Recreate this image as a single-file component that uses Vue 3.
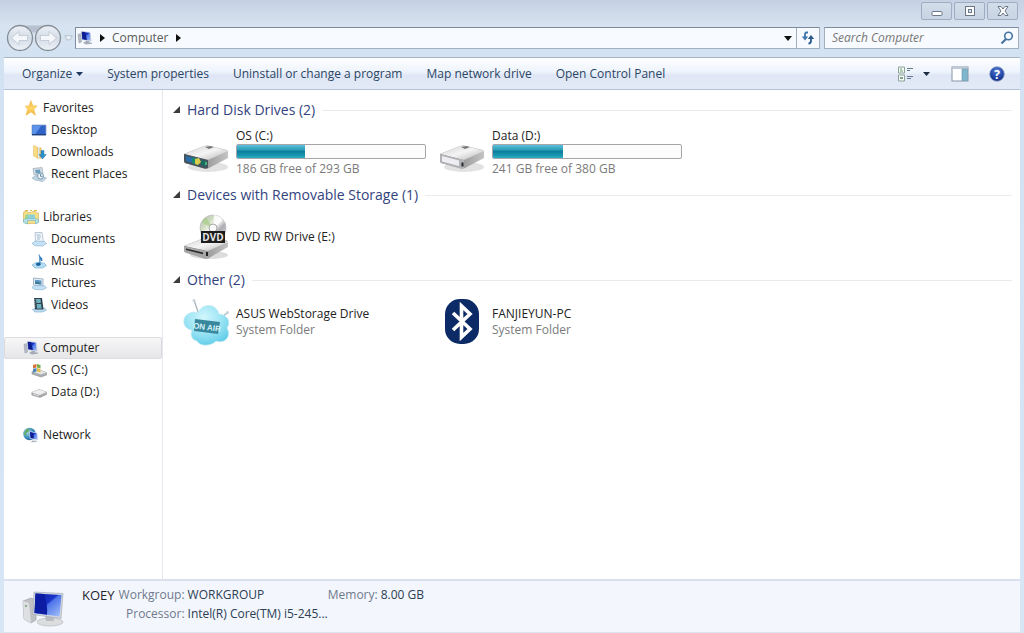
<script setup>
import { ref } from 'vue'

const search = ref('')

const groups = [
  {
    name: 'Favorites', icon: 'star',
    items: [
      { name: 'Desktop', icon: 'desktop' },
      { name: 'Downloads', icon: 'downloads' },
      { name: 'Recent Places', icon: 'recent' },
    ],
  },
  {
    name: 'Libraries', icon: 'libraries',
    items: [
      { name: 'Documents', icon: 'documents' },
      { name: 'Music', icon: 'music' },
      { name: 'Pictures', icon: 'pictures' },
      { name: 'Videos', icon: 'videos' },
    ],
  },
  {
    name: 'Computer', icon: 'computer', selected: true,
    items: [
      { name: 'OS (C:)', icon: 'osdrive' },
      { name: 'Data (D:)', icon: 'datadrive' },
    ],
  },
  { name: 'Network', icon: 'network', items: [] },
]

const sections = [
  {
    title: 'Hard Disk Drives (2)',
    items: [
      { name: 'OS (C:)', icon: 'drive-os', used: 36, note: '186 GB free of 293 GB' },
      { name: 'Data (D:)', icon: 'drive-data', used: 37, note: '241 GB free of 380 GB' },
    ],
  },
  {
    title: 'Devices with Removable Storage (1)',
    items: [{ name: 'DVD RW Drive (E:)', icon: 'dvd' }],
  },
  {
    title: 'Other (2)',
    items: [
      { name: 'ASUS WebStorage Drive', icon: 'cloud', note: 'System Folder' },
      { name: 'FANJIEYUN-PC', icon: 'bluetooth', note: 'System Folder' },
    ],
  },
]
</script>

<template>
  <div class="window">
    <svg class="defs" aria-hidden="true">
      <defs>
        <linearGradient id="gScreen" x1="0" y1="0" x2="1" y2="1">
          <stop offset="0" stop-color="#0a1f9c" /><stop offset=".45" stop-color="#1a35c8" />
          <stop offset=".5" stop-color="#4d74ea" /><stop offset="1" stop-color="#a9c4fa" />
        </linearGradient>
        <linearGradient id="gMetal" x1="0" y1="0" x2="1" y2="1">
          <stop offset="0" stop-color="#d2d2d2" /><stop offset=".5" stop-color="#f4f4f4" /><stop offset="1" stop-color="#b4b4b4" />
        </linearGradient>
        <linearGradient id="gSide" x1="0" y1="0" x2="1" y2="0">
          <stop offset="0" stop-color="#6f6f6f" /><stop offset="1" stop-color="#c4c4c4" />
        </linearGradient>
        <linearGradient id="gDisc" x1="0" y1="0" x2="1" y2="1">
          <stop offset="0" stop-color="#b4b8b4" /><stop offset=".3" stop-color="#cfdcc0" />
          <stop offset=".5" stop-color="#ffffff" /><stop offset=".65" stop-color="#adadb4" /><stop offset="1" stop-color="#e0e0e4" />
        </linearGradient>
        <radialGradient id="gCloud" cx=".45" cy=".3" r=".8">
          <stop offset="0" stop-color="#d2f6fc" /><stop offset=".5" stop-color="#9be4f4" /><stop offset="1" stop-color="#55c7e6" />
        </radialGradient>
        <radialGradient id="gGlobe" cx=".35" cy=".35" r=".7">
          <stop offset="0" stop-color="#a9dcef" /><stop offset=".6" stop-color="#3f8fc0" /><stop offset="1" stop-color="#1f5c9a" />
        </radialGradient>
        <radialGradient id="gHelp" cx=".5" cy=".3" r=".7">
          <stop offset="0" stop-color="#5c84da" /><stop offset=".6" stop-color="#2347a8" /><stop offset="1" stop-color="#152f80" />
        </radialGradient>
        <linearGradient id="gNav" x1="0" y1="0" x2="0" y2="1">
          <stop offset="0" stop-color="#eef2f7" /><stop offset=".5" stop-color="#d3dbe5" /><stop offset="1" stop-color="#edf3f9" />
        </linearGradient>
        <linearGradient id="gStar" x1="0" y1="0" x2="0" y2="1">
          <stop offset="0" stop-color="#f5a834" /><stop offset=".5" stop-color="#ffd868" /><stop offset="1" stop-color="#efae3c" />
        </linearGradient>
      </defs>

      <symbol id="star" viewBox="0 0 16 16">
        <path d="M8 .5 9.800 5.700 14.300 5.900 11 9.200 12.500 15.400 8 12 3 15.400 4.400 9.200 2 6.200 6 5.700z" fill="url(#gStar)" stroke="#f2c66c" stroke-width=".6" />
      </symbol>
      <symbol id="desktop" viewBox="0 0 16 16">
        <path d="M1 3h14v10H1z" fill="#2f63c8" stroke="#8ea4c8" stroke-width=".8" />
        <path d="M1.500 3.500h9L4 12.500H1.500z" fill="#5b92ea" />
        <path d="M1 12h14v1.300H1z" fill="#23407e" />
      </symbol>
      <symbol id="downloads" viewBox="0 0 16 16">
        <path d="M2.500 1.500 6.500 3v11l-4-2z" fill="#f9dc86" stroke="#e0b95c" stroke-width=".5" />
        <path d="M6 3.500h4.500v11H6z" fill="#efc368" />
        <path d="M7 3h1.500v11H7z" fill="#d7e8f4" />
        <path d="M10 6.500h3v4h2.300L11.500 15 8 10.500h2z" fill="#2d8fc8" stroke="#1b6ea8" stroke-width=".4" />
      </symbol>
      <symbol id="recent" viewBox="0 0 16 16">
        <path d="M2 2.500 11 1.500 12 8 3 9z" fill="#d5dde4" stroke="#94a8b6" stroke-width=".7" />
        <path d="M4 4 9 3.500 9.500 7 5 7.500z" fill="#6b9fc0" />
        <path d="M1 12 5 9.500 15.500 12 12 15.500 4 14z" fill="#c4d5e2" stroke="#8ca9be" stroke-width=".6" />
        <circle cx="9.500" cy="10" r="3" fill="#eff6fa" stroke="#7797ad" />
        <path d="M9.500 8v2.300h2" fill="none" stroke="#45708e" stroke-width=".8" />
      </symbol>
      <symbol id="libraries" viewBox="0 0 16 16">
        <path d="M.5 3 4 2l1 1.500h3L9 2.500h3.500l1 1.500h2V13L12 14.500H2.500L.5 12z" fill="#f6df86" stroke="#d9b95b" stroke-width=".7" />
        <path d="M2 1.500h3M7 1.500h2M11 1.500h3" stroke="#e1b850" />
        <path d="M3.500 5.500H12V11H3.500z" fill="#8fd0d4" /><path d="M2 6.500 5 5v6l-3 1z" fill="#9ed48f" />
        <path d="M.5 10.500 4 9.500h8l3.500 1v3L12.500 15v-3.500h-8V15l-4-1.500z" fill="#b7e1e8" stroke="#6fb3c4" stroke-width=".6" />
      </symbol>
      <symbol id="documents" viewBox="0 0 16 16">
        <path d="M4 1.500h7l1.500 9.500h-8z" fill="#f2f6fa" stroke="#9db2c6" stroke-width=".7" />
        <path d="M5.500 4h4M6 6h4M6 8h3" stroke="#9fb9d0" />
        <path d="M1 12.500 4.500 10l9 .5 2 2-4 2.500-7.500-.3z" fill="#c6e1f3" stroke="#8db8d8" stroke-width=".7" />
      </symbol>
      <symbol id="music" viewBox="0 0 16 16">
        <path d="M1 12 5 9.500l8 .5 2.500 2.500-4 2.500H4z" fill="#b4dcf2" stroke="#7fb5d6" stroke-width=".7" />
        <path d="M8 1.500c0 2.500 4 3 2.700 6.500C10.500 6 9 5.700 9 5.700V11" fill="#1f71b5" stroke="#1f71b5" stroke-width=".9" />
        <ellipse cx="7.300" cy="11.300" rx="2.300" ry="1.700" fill="#1b62a3" />
      </symbol>
      <symbol id="pictures" viewBox="0 0 16 16">
        <path d="M2.500 3 12 4v7l-9.500-1z" fill="#e8eff5" stroke="#8ba5b9" stroke-width=".8" />
        <path d="M4 4.800 10.500 5.500v4L4 8.800z" fill="#5b98c5" /><path d="M4 7.500l3-.8 3.500 2.800L4 8.800z" fill="#39758f" />
        <path d="M1 12.500 4 10.500l9.500.3 2 2-4 2-7.500-.3z" fill="#c6e1f3" stroke="#8db8d8" stroke-width=".7" />
      </symbol>
      <symbol id="videos" viewBox="0 0 16 16">
        <path d="M1.500 12.500 5 11h8.500l2 2-4 2H4z" fill="#bcdcf0" stroke="#86b2d0" stroke-width=".7" />
        <path d="M3 1h8l1.500 11.500H4z" fill="#30424f" />
        <path d="M5 2h4.500l.4 4H5.400zM5.600 7h4.500l.5 4.500H6z" fill="#6fb0bd" />
        <path d="M3.800 2v9" stroke="#cdd7dc" stroke-width=".7" stroke-dasharray="1 1" />
      </symbol>
      <symbol id="computer" viewBox="0 0 16 16">
        <path d="M1 4.500 3.500 3.500 4.500 12 2 13z" fill="#b7bdc8" stroke="#8c93a3" stroke-width=".5" />
        <path d="M4.500 1.500 13 2.500l1 8.500-9-1.500z" fill="url(#gScreen)" stroke="#c0c8da" stroke-width=".7" />
        <path d="M4.800 2 8 2.300 10 10 5.500 9.300z" fill="#0d1f8e" />
        <path d="M9 11h3l.5 1.500h2.500v1.300L9 14.500 6 13z" fill="#a6adb9" />
      </symbol>
      <symbol id="osdrive" viewBox="0 0 16 16">
        <path d="M1 9.500 7 7.500l8.500 3V13l-5.500 2-9-3z" fill="#a9adaf" stroke="#7f8486" stroke-width=".5" />
        <path d="M1 9.500 7 7.500l8.500 3-5.500 2z" fill="#e3e5e6" />
        <path d="M2 3 5.500 2v3.500L2 6.500z" fill="#d8733d" /><path d="M6 2 9.500 3v3.500L6 5.500z" fill="#79ae4c" />
        <path d="M2 7 5.500 6v3.500L2 10.500z" fill="#4d86bd" /><path d="M6 6 9.500 7v3.500L6 9.500z" fill="#e6bf4a" />
      </symbol>
      <symbol id="datadrive" viewBox="0 0 16 16">
        <path d="M.8 8.500 8 5.500 15.500 8v2.500L9 13.500.8 11z" fill="#a7a9ab" stroke="#8b8d90" stroke-width=".5" />
        <path d="M.8 8.500 8 5.500 15.500 8 9 11z" fill="#efefef" /><path d="M2 9.500 8 11.300v1L2 10.500z" fill="#dcdcde" />
      </symbol>
      <symbol id="network" viewBox="0 0 16 16">
        <circle cx="6.500" cy="7" r="6.200" fill="url(#gGlobe)" />
        <path d="M3 2.500 7 1.500 5.500 5 3.500 6 3 9 .8 7z" fill="#62ad68" />
        <path d="M6.500 4.500 14 6l.8 7-7.600-1.500z" fill="url(#gScreen)" stroke="#d6deec" stroke-width=".8" />
        <path d="M7 5.300 10 6l1 5.500-3.200-.6z" fill="#0d1f8e" /><path d="M9 13.500l4 .3 1 1.200-6 .2z" fill="#aeb5be" />
      </symbol>

      <symbol id="drive-os" viewBox="0 0 48 48">
        <ellipse cx="26" cy="39" rx="20" ry="5" fill="#e2e2e2" />
        <path d="M2 26 22 18q3-1 6 0l17 4q1 1 1 2v6L27 40q-2 1-5 0L3 35q-1-1-1-3z" fill="url(#gSide)" />
        <path d="M2 26 22 18q3-1 6 0l18 5-20 9z" fill="url(#gMetal)" />
        <path d="M23 19l5-1 4 1-5 2z" fill="#777" />
        <path d="M2 26 26 32V40q-2 1-4 .6L3 35q-1-1-1-3z" fill="#46555d" />
        <path d="M4 28 14 30.500v5.500L4 33z" fill="#2a6ca8" /><path d="M10 29.500l6 1.500v6l-6-2z" fill="#168a6c" />
        <path d="M13 31l4-1 2 4-3 3-3-1z" fill="#d8cc4b" /><path d="M19 32l5 1.500v5L19 37z" fill="#176d62" />
        <path d="M24 34v3" stroke="#58e889" stroke-width="1.200" />
      </symbol>
      <symbol id="drive-data" viewBox="0 0 48 48">
        <ellipse cx="26" cy="39" rx="20" ry="5" fill="#e2e2e2" />
        <path d="M2 26 22 18q3-1 6 0l17 4q1 1 1 2v6L27 40q-2 1-5 0L3 35q-1-1-1-3z" fill="url(#gSide)" />
        <path d="M2 26 22 18q3-1 6 0l18 5-20 9z" fill="url(#gMetal)" />
        <path d="M23 19l5-1 4 1-5 2z" fill="#777" />
        <path d="M2 26 26 32V40q-2 1-4 .6L3 35q-1-1-1-3z" fill="#b2b3b7" />
        <path d="M4 28 21 32.500v5.500L4 33.500z" fill="#eeeef2" />
        <path d="M24.500 34.500v4" stroke="#222" stroke-width="2" />
      </symbol>
      <symbol id="dvd" viewBox="0 0 48 48">
        <ellipse cx="27" cy="42" rx="19" ry="4" fill="#dcdcdc" />
        <path d="M2 33 22 25l22 2q2 1 2 3v4L27 45q-2 1-5 0L3 39q-1-1-1-3z" fill="url(#gSide)" />
        <path d="M2 33 22 25l24 4-20 9z" fill="url(#gMetal)" />
        <path d="M2 33 26 38.500V45q-2 1-4 .6L3 39.500q-1-1-1-3z" fill="#a6a6a6" />
        <path d="M4 35.500l17 4v1.800l-17-4.200z" fill="#2a2a2a" /><path d="M25 39v4" stroke="#222" stroke-width="2" />
        <circle cx="31" cy="15" r="13" fill="url(#gDisc)" stroke="#b9b9b9" stroke-width=".7" />
        <path d="M31 15 20 9.500q2-4 4-5z" fill="#a6cf84" opacity=".7" /><path d="M31 15 32 2q5 .5 8 4z" fill="#fff" opacity=".8" />
        <circle cx="31" cy="15" r="4" fill="#fafafa" stroke="#a9a9a9" />
        <path d="M19 18h24v12H19z" fill="#1d1d1d" />
      </symbol>
      <symbol id="cloud" viewBox="0 0 48 48">
        <path d="M12 2 17 17M46 14 37 22" stroke="#a6b6bd" stroke-width="1.300" />
        <circle cx="12" cy="2.500" r="1.500" fill="#c6d3d8" /><circle cx="45.500" cy="14.500" r="1.500" fill="#c6d3d8" />
        <path d="M10 32C0 31-1 18 8 15c5-2 8 0 8 0C20 5 34 5 37 16c9 1 12 8 8 14 5 9-3 16-11 13-4 5-16 6-19 0-5-1-7-6-5-11z" fill="url(#gCloud)" stroke="#bdeaf3" stroke-width=".8" />
        <path d="M13 21 38 24l-2 12-24-3z" fill="#38879c" />
      </symbol>
      <symbol id="bluetooth" viewBox="0 0 48 48">
        <rect x="7" y="1" width="34" height="45" rx="15" fill="#0c2b66" />
        <path d="M15 15 32 31 23.500 39V8L32 16 15 32" fill="none" stroke="#fff" stroke-width="3.600" stroke-linejoin="miter" />
      </symbol>
      <symbol id="bigpc" viewBox="0 0 44 40">
        <path d="M1 12 9 9l5 2v20l-5 3-7-4z" fill="#bfc1c5" stroke="#999ca3" stroke-width=".6" />
        <path d="M1 12l6 2 2 20-7-4z" fill="#dedfe2" /><circle cx="4" cy="17" r="1" fill="#69a55b" />
        <ellipse cx="28" cy="33" rx="13" ry="4" fill="#dcdddf" stroke="#b2b4b8" stroke-width=".6" />
        <path d="M23 25h8l1 7h-8z" fill="#b9bbc0" />
        <path d="M12 3 41 4.500 39 29.500 11 25.500z" fill="#d0d6df" stroke="#9da5b1" stroke-width=".6" />
        <path d="M13.500 4.500 39.500 6 37.500 27.500 12.500 24z" fill="url(#gScreen)" />
        <path d="M13.500 4.500 22 5q4 12 3 20.800L12.500 24z" fill="#0c1da3" />
      </symbol>
    </svg>

    <header class="titlebar">
      <button class="caption" aria-label="Minimize"><svg width="14" height="12" viewBox="0 0 14 12"><rect x="2" y="6.500" width="10" height="4" rx="1" fill="#fff" stroke="#6c7788" /></svg></button>
      <button class="caption" aria-label="Maximize"><svg width="14" height="12" viewBox="0 0 14 12"><rect x="2.500" y="1.500" width="9" height="9" fill="#fff" stroke="#6c7788" /><rect x="5.500" y="4.500" width="3" height="3" fill="#dbe4ee" stroke="#6c7788" /></svg></button>
      <button class="caption" aria-label="Close"><svg width="14" height="12" viewBox="0 0 14 12"><path d="M2 1.500h3l2 2.500 2-2.500h3L9 6l3 4.500H9L7 8l-2 2.500H2L5 6z" fill="#fff" stroke="#6c7788" /></svg></button>
    </header>

    <div class="navrow">
      <div class="history">
        <svg class="track" viewBox="0 0 56 28" aria-hidden="true"><path d="M14 1.500h28L28 9z" fill="#b7c1cf" /></svg>
        <button class="round" aria-label="Back"><svg viewBox="0 0 28 28"><circle cx="14" cy="14" r="12.500" fill="url(#gNav)" stroke="#858d98" stroke-width="1.300" /><path d="M5.500 14 13 7.500v4h8.500v5H13v4z" fill="#f5f8fb" stroke="#bcc5d0" stroke-width=".8" /></svg></button>
        <button class="round" aria-label="Forward"><svg viewBox="0 0 28 28"><circle cx="14" cy="14" r="12.500" fill="url(#gNav)" stroke="#858d98" stroke-width="1.300" /><path d="M22.500 14 15 7.500v4H6.500v5H15v4z" fill="#f5f8fb" stroke="#bcc5d0" stroke-width=".8" /></svg></button>
      </div>
      <button class="recent" aria-label="Recent pages"><svg width="9" height="6" viewBox="0 0 9 6"><path d="M.8.8h7.400L6 4.800H3z" fill="#eef4fa" stroke="#a8b5c5" stroke-width=".8" /></svg></button>
      <div class="address">
        <svg class="i16" aria-hidden="true"><use href="#computer" /></svg>
        <svg width="5" height="8" viewBox="0 0 5 8" aria-hidden="true"><path d="M0 0l5 4-5 4z" fill="#111" /></svg>
        <a class="crumb" href="#">Computer</a>
        <svg width="5" height="8" viewBox="0 0 5 8" aria-hidden="true"><path d="M0 0l5 4-5 4z" fill="#111" /></svg>
        <button class="drop" aria-label="Previous locations"><svg width="8" height="5" viewBox="0 0 8 5"><path d="M0 0h8L4 5z" fill="#111" /></svg></button>
        <button class="refresh" aria-label="Refresh"><svg width="14" height="14" viewBox="0 0 14 14"><path d="M7 1.500H5.500q-1.500 0-1.500 2V8" fill="none" stroke="#3b76ac" stroke-width="1.800" /><path d="M.8 5.500h6.400L4 9.500z" fill="#3b76ac" /><path d="M7.500 12.500q2.500 0 2.500-3V7" fill="none" stroke="#2c5a8c" stroke-width="1.800" /><path d="M6.800 8h6.400L10 4z" fill="#2c5a8c" /></svg></button>
      </div>
      <label class="search">
        <input v-model="search" type="text" placeholder="Search Computer" aria-label="Search Computer">
        <svg width="14" height="14" viewBox="0 0 14 14" aria-hidden="true"><circle cx="8.500" cy="5" r="3.800" fill="#f4faff" stroke="#4674a0" stroke-width="1.600" /><path d="M6 8 1.500 12.500" stroke="#4674a0" stroke-width="2.200" /></svg>
      </label>
    </div>

    <div class="toolbar">
      <button>Organize <svg width="7" height="4" viewBox="0 0 7 4"><path d="M0 0h7L3.500 4z" fill="#1e395b" /></svg></button>
      <button>System properties</button>
      <button>Uninstall or change a program</button>
      <button>Map network drive</button>
      <button>Open Control Panel</button>
      <div class="tools">
        <button aria-label="Change your view"><svg width="18" height="16" viewBox="0 0 18 16"><path d="M1.500 1h6v6h-6zM1.500 9h6v6h-6z" fill="#f6faf6" stroke="#8da39a" /><path d="M3 3h2M3 5h3" stroke="#6d9b72" /><path d="M3 11h3v2H3z" fill="#7ea38c" /><path d="M10 2.500h6M10 4.500h3M10 10.500h6M10 12.500h4" stroke="#66798c" /></svg></button>
        <button class="viewdrop" aria-label="More view options"><svg width="7" height="4" viewBox="0 0 7 4"><path d="M0 0h7L3.500 4z" fill="#1b2b40" /></svg></button>
        <button class="pane" aria-label="Show the preview pane"><svg width="18" height="16" viewBox="0 0 18 16"><rect x="1" y="1" width="16" height="14" fill="#fff" stroke="#8694a8" /><path d="M1 1.500h16v1.500H1z" fill="#bfc9d6" /><path d="M11 3h5.500v11.500H11z" fill="#7fb6cc" stroke="#6d9db5" stroke-width=".7" /></svg></button>
        <button class="help" aria-label="Get help"><svg width="16" height="16" viewBox="0 0 16 16"><circle cx="8" cy="8" r="7.300" fill="url(#gHelp)" stroke="#92a3cb" stroke-width=".8" /><text x="8" y="12.500" text-anchor="middle" font-size="12" font-weight="700" fill="#fff">?</text></svg></button>
      </div>
    </div>

    <div class="body">
      <nav class="sidebar" aria-label="Navigation pane">
        <ul v-for="g in groups" :key="g.name">
          <li><a href="#" class="root" :class="{ selected: g.selected }"><svg class="i16" aria-hidden="true"><use :href="'#' + g.icon" /></svg>{{ g.name }}</a></li>
          <li v-for="i in g.items" :key="i.name"><a href="#" class="leaf"><svg class="i16" aria-hidden="true"><use :href="'#' + i.icon" /></svg>{{ i.name }}</a></li>
        </ul>
      </nav>

      <main class="content">
        <section v-for="s in sections" :key="s.title">
          <h2><button aria-label="Collapse group"><svg width="7" height="7" viewBox="0 0 7 7"><path d="M7 0v7H0z" fill="#3c3c3c" /></svg></button>{{ s.title }}</h2>
          <div class="items">
            <a v-for="i in s.items" :key="i.name" href="#" class="item">
              <svg class="i48" viewBox="0 0 48 48" aria-hidden="true">
                <use :href="'#' + i.icon" width="48" height="48" />
                <text v-if="i.icon === 'dvd'" x="31" y="28" text-anchor="middle" font-size="10" font-weight="700" fill="#e6e6e6">DVD</text>
                <text v-if="i.icon === 'cloud'" class="onair" x="25" y="32" text-anchor="middle" transform="rotate(7 25 29)">ON AIR</text>
              </svg>
              <span class="info">
                <span class="name">{{ i.name }}</span>
                <span v-if="i.used" class="meter" role="progressbar" :aria-label="i.name + ' space used'" :aria-valuenow="i.used"><span class="fill" :style="{ width: i.used + '%' }"></span></span>
                <span v-if="i.note" class="note">{{ i.note }}</span>
              </span>
            </a>
          </div>
        </section>
      </main>
    </div>

    <footer class="details">
      <svg class="pc" aria-hidden="true"><use href="#bigpc" /></svg>
      <strong>KOEY</strong>
      <dl class="specs">
        <dt>Workgroup:</dt><dd>WORKGROUP</dd>
        <dt>Processor:</dt><dd>Intel(R) Core(TM) i5-245...</dd>
      </dl>
      <dl class="specs"><dt>Memory:</dt><dd>8.00 GB</dd></dl>
    </footer>
  </div>
</template>

<style>
body { margin: 0; }
</style>

<style scoped>
.window {
  box-sizing: border-box;
  min-height: 100vh;
  display: flex;
  flex-direction: column;
  padding: 0 4px;
  background: linear-gradient(#c5d1e2 0, #d7e3f0 26px, #d3e2f2 56px, #d6e6f5 100%);
  font: 12px/16px "Open Sans", "Noto Sans", sans-serif;
  color: #222;
}
.defs { position: absolute; width: 0; height: 0; }
svg { display: block; flex: none; }
button { border: 0; padding: 0; background: none; font: inherit; color: inherit; }
a { color: inherit; text-decoration: none; }
.i16 { width: 16px; height: 16px; }
.i48 { width: 48px; height: 48px; }
.onair { font: 700 8px "Liberation Sans", sans-serif; fill: #d4f3f8; }

.titlebar { display: flex; justify-content: flex-end; gap: 2px; padding: 2px 2px 0 0; height: 22px; }
.caption {
  box-sizing: border-box; width: 31px; height: 18px;
  display: grid; place-items: center;
  border: 1px solid #9fadc2; border-radius: 2px;
  background: linear-gradient(#d3ddea, #c8d4e3);
}

.navrow { display: flex; align-items: center; height: 28px; padding: 0 1px 5px 2px; }
.history { position: relative; display: flex; }
.track { position: absolute; inset: 0; width: 56px; height: 28px; }
.round { position: relative; width: 28px; height: 28px; }
.recent { width: 13px; display: grid; place-items: center; }
.address {
  box-sizing: border-box; flex: 1; height: 22px;
  display: flex; align-items: center; gap: 7px;
  padding-left: 1px;
  border: 1px solid #a3afbf; border-top-color: #7f8b9c; border-left-color: #7f8b9c;
  background: #f7fafe; color: #5a5a5a;
}
.drop { margin-left: auto; width: 9px; height: 20px; display: grid; place-items: center; }
.refresh { width: 23px; height: 20px; margin-left: -3px; display: grid; place-items: center; border-left: 1px solid #a3afbf; }
.search {
  box-sizing: border-box; width: 195px; height: 22px; margin-left: 4px;
  display: flex; align-items: center; padding: 0 4px 0 7px;
  border: 1px solid #a3afbf; border-top-color: #7f8b9c;
  background: #f7fafe;
}
.search input { flex: 1; min-width: 0; padding: 0; border: 0; outline: 0; background: none; font: inherit; color: #222; }
.search input::placeholder { color: #777; font-style: italic; opacity: 1; }

.toolbar {
  box-sizing: border-box; height: 33px;
  display: flex; align-items: center; gap: 24px;
  padding: 0 15px 0 18px;
  border-top: 1px solid #a9b4c3; border-bottom: 1px solid #b4c2d6;
  background: linear-gradient(#fdfeff, #eef4fc 45%, #dfe7f6 55%, #e2eaf7);
  color: #2b4563;
}
.toolbar button { display: flex; align-items: center; gap: 4px; white-space: nowrap; }
.tools { display: flex; align-items: center; margin-left: auto; }
.viewdrop { margin-left: 8px; }
.pane { margin-left: 21px; }
.help { margin-left: 20px; }

.body { flex: 1; display: flex; background: #fff; }
.sidebar { box-sizing: border-box; width: 159px; padding-top: 7px; border-right: 1px solid #e3e8ef; }
.sidebar ul { list-style: none; margin: 0 0 21px; padding: 0; }
.sidebar a { box-sizing: border-box; height: 22px; display: flex; align-items: center; gap: 4px; white-space: nowrap; border: 1px solid transparent; }
.sidebar .root { padding-left: 18px; }
.sidebar .leaf { padding-left: 26px; }
.sidebar .selected { background: linear-gradient(#f7f7f8, #e6e6e8); border-color: #dcdce0; border-radius: 2px; }

.content { flex: 1; padding: 10px 8px 0 8px; }
h2 { display: flex; align-items: center; gap: 7px; height: 20px; margin: 0; padding-left: 2px; font-size: 14px; font-weight: 400; color: #33437e; }
h2 button { margin-top: -2px; }
h2::after { content: ""; flex: 1; height: 1px; background: #e9ebef; }
.items { display: grid; grid-template-columns: repeat(auto-fill, 256px); height: 63px; margin-bottom: 2px; }
.item { display: flex; align-items: center; gap: 6px; margin-left: 11px; }
.info { display: flex; flex-direction: column; width: 190px; }
.name { line-height: 17px; white-space: nowrap; }
.note { color: #7b7b7b; }
.meter { box-sizing: border-box; height: 15px; margin-bottom: 2px; border: 1px solid #a8a3a8; border-radius: 2px; background: #fdfcfd; overflow: hidden; }
.fill { display: block; height: 100%; background: linear-gradient(#58c2d8, #2f9fba 35%, #0c7f9c 50%, #1c9ab4 85%, #2fb2c8); }

.details {
  box-sizing: border-box; height: 54px;
  display: flex; align-items: flex-start; padding: 6px 0 0 18px;
  border-top: 2px solid #dbe0ec; border-bottom: 1px solid #dde4f0;
  background: #f3f6fd; color: #2b4054;
}
.pc { width: 44px; height: 40px; margin-top: 2px; }
strong { margin: 0 4px 0 16px; font-size: 13px; font-weight: 400; color: #1f2530; }
.specs { display: grid; grid-template-columns: auto auto; gap: 3px; margin: 0; }
.specs dt { text-align: right; color: #70798c; }
.specs dd { margin: 0; }
</style>
